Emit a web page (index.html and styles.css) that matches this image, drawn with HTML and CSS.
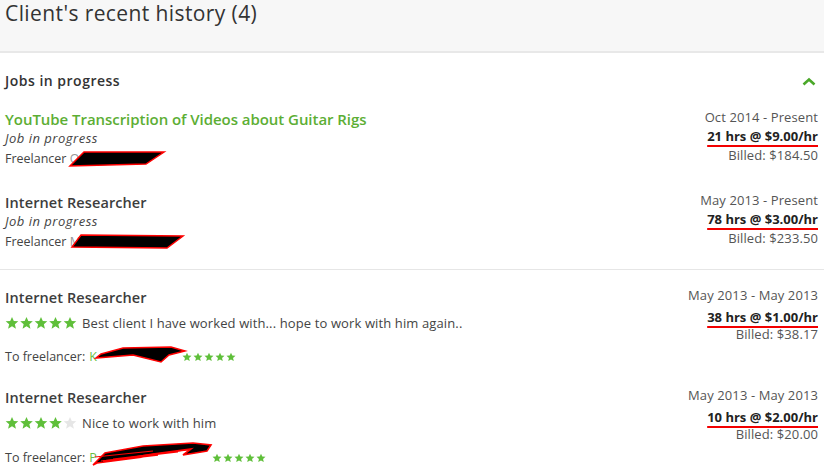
FILE: index.html
```html
<!DOCTYPE html>
<html>
<head>
<meta charset="utf-8">
<link rel="stylesheet" href="styles.css">
</head>
<body>
<svg width="0" height="0" class="defs">
  <defs>
    <symbol id="star" viewBox="0 0 24 24"><polygon points="12,1.5 15.1,8.6 22.8,9.2 16.9,14.2 18.7,21.8 12,17.7 5.3,21.8 7.1,14.2 1.2,9.2 8.9,8.6"/></symbol>
  </defs>
</svg>
<div class="header">
  <h1 class="title">Client's recent history (4)</h1>
</div>
<div class="section">
  <div class="section-head">
    <span>Jobs in progress</span>
    <svg class="chevron" width="14" height="9" viewBox="0 0 14 9"><polyline points="1.5,7.5 7,2.5 12.5,7.5" fill="none" stroke="#4aa829" stroke-width="2.6"/></svg>
  </div>

  <div class="job">
    <div class="left">
      <div class="job-title green">YouTube Transcription of Videos about Guitar Rigs</div>
      <div class="sub italic">Job in progress</div>
      <div class="sub redact-wrap">Freelancer <span class="hidden-name hn1">O.</span>
        <svg class="redact r1" width="100" height="20" viewBox="0 0 100 20"><polygon points="16,3 96,3 78,15 2,17" fill="#000" stroke="#f00" stroke-width="1.5"/></svg>
      </div>
    </div>
    <div class="right">
      <div class="date">Oct 2014 - Present</div>
      <div class="hrs">21 hrs @ $9.00/hr</div>
      <div class="billed">Billed: $184.50</div>
    </div>
  </div>

  <div class="job job2">
    <div class="left">
      <div class="job-title">Internet Researcher</div>
      <div class="sub italic">Job in progress</div>
      <div class="sub redact-wrap">Freelancer <span class="hidden-name hn2">M</span>
        <svg class="redact r2" width="118" height="20" viewBox="0 0 118 20"><polygon points="12,3 114,4 98,16 3,15" fill="#000" stroke="#f00" stroke-width="1.5"/></svg>
      </div>
    </div>
    <div class="right">
      <div class="date">May 2013 - Present</div>
      <div class="hrs">78 hrs @ $3.00/hr</div>
      <div class="billed">Billed: $233.50</div>
    </div>
  </div>
</div>

<div class="section section2">
  <div class="job">
    <div class="left">
      <div class="job-title">Internet Researcher</div>
      <div class="rating">
        <svg class="stars" width="72" height="14" viewBox="0 0 72 14"><use href="#star" x="0" width="14" height="14"/><use href="#star" x="14.5" width="14" height="14"/><use href="#star" x="29" width="14" height="14"/><use href="#star" x="43.5" width="14" height="14"/><use href="#star" x="58" width="14" height="14"/></svg>
        <span>Best client I have worked with... hope to work with him again..</span>
      </div>
      <div class="sub tofree redact-wrap">To freelancer: <span class="hidden-name green hn3">K</span>
        <svg class="small-stars" width="55" height="10" viewBox="0 0 55 10"><use href="#star" x="0" width="10" height="10"/><use href="#star" x="11" width="10" height="10"/><use href="#star" x="22" width="10" height="10"/><use href="#star" x="33" width="10" height="10"/><use href="#star" x="44" width="10" height="10"/></svg>
        <svg class="redact r3" width="98" height="22" viewBox="0 0 98 22"><polygon points="8,9 30,3 78,2 92,6 76,10 68,17 40,10 3,13" fill="#000" stroke="#f00" stroke-width="1.5"/></svg>
      </div>
    </div>
    <div class="right">
      <div class="date">May 2013 - May 2013</div>
      <div class="hrs hrs2">38 hrs @ $1.00/hr</div>
      <div class="billed billed2">Billed: $38.17</div>
    </div>
  </div>

  <div class="job job4">
    <div class="left">
      <div class="job-title">Internet Researcher</div>
      <div class="rating">
        <svg class="stars" width="72" height="14" viewBox="0 0 72 14"><use href="#star" x="0" width="14" height="14"/><use href="#star" x="14.5" width="14" height="14"/><use href="#star" x="29" width="14" height="14"/><use href="#star" x="43.5" width="14" height="14"/><use href="#star" x="58" width="14" height="14" class="off"/></svg>
        <span>Nice to work with him</span>
      </div>
      <div class="sub tofree tofree4 redact-wrap">To freelancer: <span class="hidden-name green hn4">P</span>
        <svg class="small-stars" width="55" height="10" viewBox="0 0 55 10"><use href="#star" x="0" width="10" height="10"/><use href="#star" x="11" width="10" height="10"/><use href="#star" x="22" width="10" height="10"/><use href="#star" x="33" width="10" height="10"/><use href="#star" x="44" width="10" height="10"/></svg>
        <svg class="redact r4" width="135" height="26" viewBox="0 0 135 26"><path d="M10,24 L22,12 L60,5 L110,2 L128,4 L124,10 L100,14 L108,8 L70,13 L40,18 L75,14 L20,20 L60,16 L14,22 Z" fill="#000" stroke="#f00" stroke-width="1.6"/><path d="M12,16 L70,10 M18,20 L95,11 M30,18 L105,9" stroke="#f00" stroke-width="1.2" fill="none"/></svg>
      </div>
    </div>
    <div class="right">
      <div class="date">May 2013 - May 2013</div>
      <div class="hrs hrs2">10 hrs @ $2.00/hr</div>
      <div class="billed billed2">Billed: $20.00</div>
    </div>
  </div>
</div>
</body>
</html>
```

FILE: styles.css
```css
html, body {
  margin: 0;
  padding: 0;
  background: #fff;
}
body {
  font-family: "Open Sans", "Liberation Sans", sans-serif;
  color: #3a3a3a;
  width: 824px;
  overflow: hidden;
}
.defs {
  position: absolute;
  width: 0;
  height: 0;
}
.header {
  height: 51px;
  background: #f7f7f7;
  border-bottom: 2px solid #e8e8e8;
  padding: 0 5px;
  box-sizing: content-box;
}
.title {
  margin: 0;
  font-size: 21px;
  font-weight: 400;
  line-height: 26px;
  letter-spacing: 0.4px;
  color: #333;
}
.section {
  padding: 18px 6px 18px 5px;
}
.section2 {
  border-top: 1px solid #e6e6e6;
  padding-top: 16px;
}
.section-head {
  display: flex;
  justify-content: space-between;
  align-items: center;
  font-size: 14px;
  font-weight: 600;
  line-height: 20px;
  letter-spacing: 0.5px;
  color: #333;
  margin-bottom: 17px;
}
.chevron {
  margin-right: 2px;
}
.job {
  display: flex;
  justify-content: space-between;
  align-items: flex-start;
}
.job2 {
  margin-top: 23px;
}
.job4 {
  margin-top: 19px;
}
.left {
  padding-top: 2px;
}
.job-title {
  font-size: 14.5px;
  font-weight: 600;
  line-height: 19px;
  letter-spacing: 0.1px;
  color: #3d3d3d;
}
.job-title.green {
  font-size: 15px;
  letter-spacing: -0.05px;
}
.green {
  color: #5cae34;
}
.job-title.green {
  color: #5cae34;
}
.sub {
  font-size: 12.5px;
  line-height: 19.5px;
  color: #444;
}
.italic {
  font-size: 13px;
  font-style: italic;
  letter-spacing: 0.5px;
}
.redact-wrap {
  position: relative;
}
.hidden-name {
  color: #999;
  display: inline-block;
}
.hidden-name.green {
  color: #6abf45;
}
.hn3 { width: 90px; }
.hn4 { width: 120px; }
.redact {
  position: absolute;
}
.r1 { left: 63px; top: 0px; }
.r2 { left: 64px; top: 0px; }
.r3 { left: 88px; top: -2px; }
.r4 { left: 78px; top: -7px; }
.small-stars {
  fill: #5fbf3a;
  margin-left: 3px;
}
.tofree {
  margin-top: 14px;
  line-height: 20px;
  display: flex;
  align-items: center;
}
.tofree .hidden-name {
  margin-left: 4px;
}
.tofree4 {
  margin-top: 15px;
}
.rating {
  display: flex;
  align-items: center;
  margin-top: 6px;
  font-size: 13px;
  line-height: 20px;
  letter-spacing: 0.12px;
  color: #444;
}
.stars {
  fill: #5fbf3a;
  margin-right: 5px;
}
.stars .off {
  fill: #e6e6e6;
}
.right {
  text-align: right;
  font-size: 13px;
  line-height: 19px;
  letter-spacing: 0.1px;
  color: #555;
}
.hrs {
  font-weight: 700;
  letter-spacing: 0;
  color: #222;
  text-decoration: underline;
  text-decoration-color: #f20000;
  text-decoration-thickness: 2px;
  text-underline-offset: 4px;
}
.hrs2 {
  margin-top: 4px;
  line-height: 17px;
}
.billed2 {
  line-height: 17px;
}
```
